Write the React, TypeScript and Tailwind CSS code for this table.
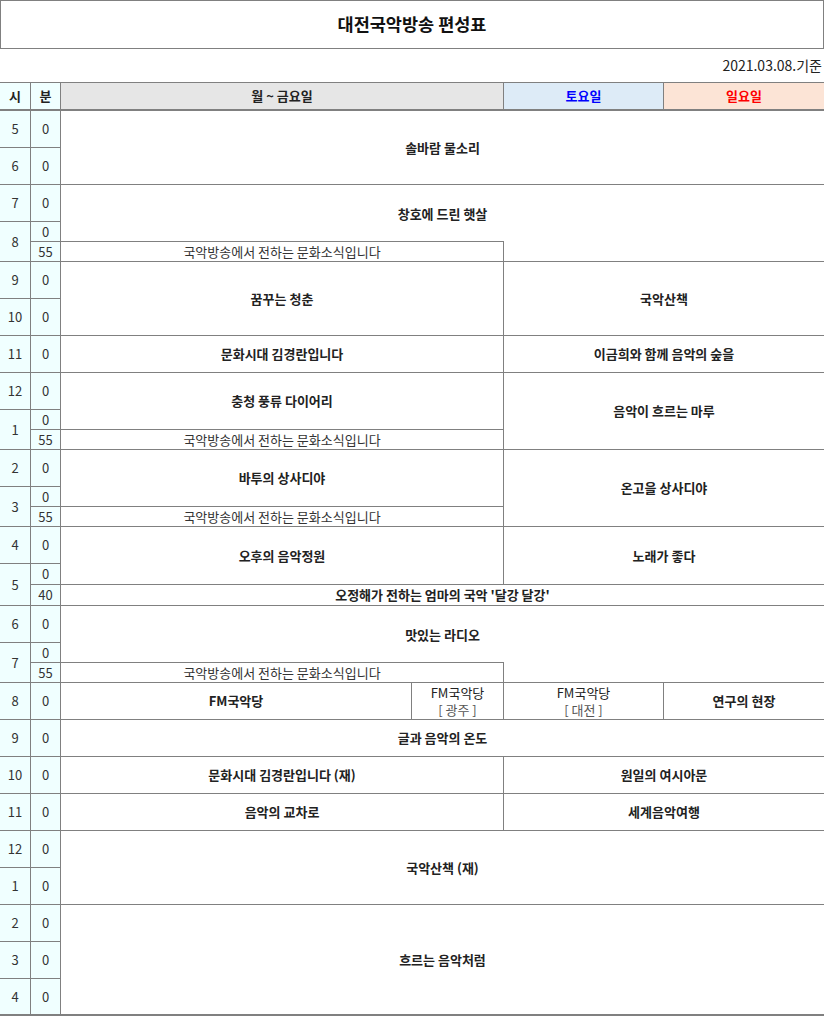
import React from "react";
import { twMerge } from "tailwind-merge";

type P = { className?: string; children?: React.ReactNode };

const Cell = ({ className = "", children }: P) => (
  <div
    className={twMerge(
      "flex items-center justify-center border-b border-r border-[#808080] pb-px text-center leading-[17px]",
      className
    )}
  >
    {children}
  </div>
);

const H = ({ className = "", children }: P) => (
  <Cell className={twMerge("bg-[#f0ffff] text-[#333]", className)}>{children}</Cell>
);

const Prog = ({ className = "", children }: P) => (
  <Cell className={twMerge("font-bold text-[#222]", className)}>{children}</Cell>
);

const News = ({ className = "" }: { className?: string }) => (
  <Cell className={twMerge("col-span-2 text-[#333] shadow-[0_-1px_0_#808080]", className)}>
    국악방송에서 전하는 문화소식입니다
  </Cell>
);

export default function App() {
  return (
    <div className="w-[824px] bg-white font-['Noto_Sans_CJK_KR',sans-serif] text-[13px] text-[#333]">
      <div className="flex h-[49px] items-center justify-center border border-[#808080] pb-px">
        <h1 className="text-[17.5px] font-bold text-[#111]">대전국악방송 편성표</h1>
      </div>
      <div className="flex h-[33px] items-center justify-end pr-[2px] text-[14px] text-[#222]">2021.03.08.기준</div>
      <div className="grid grid-cols-[31px_30px_351px_92px_160px_160px] grid-rows-[29px_37px_37px_37px_20px_20px_37px_37px_37px_37px_20px_20px_37px_20px_20px_37px_21px_21px_37px_20px_20px_37px_37px_37px_37px_37px_37px_37px_37px_37px]">
        {/* header */}
        <H className="border-t border-b-2 font-bold text-[#222]">시</H>
        <H className="border-t border-b-2 font-bold text-[#222]">분</H>
        <Cell className="col-span-2 border-t border-b-2 bg-[#e6e6e6] font-bold text-[#222]">월 ~ 금요일</Cell>
        <Cell className="border-t border-b-2 bg-[#ddebf7] font-bold text-[#0000ff]">토요일</Cell>
        <Cell className="border-t border-b-2 border-r-0 bg-[#fce4d6] font-bold text-[#ff0000]">일요일</Cell>

        {/* 5 */}
        <H>5</H>
        <H>0</H>
        <Prog className="col-span-4 row-span-2 border-r-0">솔바람 물소리</Prog>
        {/* 6 */}
        <H>6</H>
        <H>0</H>
        {/* 7 */}
        <H>7</H>
        <H>0</H>
        <Prog className="col-span-4 row-span-2 border-r-0 border-b-0">창호에 드린 햇살</Prog>
        {/* 8 */}
        <H className="row-span-2">8</H>
        <H>0</H>
        <H>55</H>
        <News />
        <Cell className="col-span-2 border-r-0" />
        {/* 9 */}
        <H>9</H>
        <H>0</H>
        <Prog className="col-span-2 row-span-2">꿈꾸는 청춘</Prog>
        <Prog className="col-span-2 row-span-2 border-r-0">국악산책</Prog>
        {/* 10 */}
        <H>10</H>
        <H>0</H>
        {/* 11 */}
        <H>11</H>
        <H>0</H>
        <Prog className="col-span-2">문화시대 김경란입니다</Prog>
        <Prog className="col-span-2 border-r-0">이금희와 함께 음악의 숲을</Prog>
        {/* 12 */}
        <H>12</H>
        <H>0</H>
        <Prog className="col-span-2 row-span-2">충청 풍류 다이어리</Prog>
        <Prog className="col-span-2 row-span-3 border-r-0">음악이 흐르는 마루</Prog>
        {/* 1 */}
        <H className="row-span-2">1</H>
        <H>0</H>
        <H>55</H>
        <News className="shadow-none" />
        {/* 2 */}
        <H>2</H>
        <H>0</H>
        <Prog className="col-span-2 row-span-2">바투의 상사디야</Prog>
        <Prog className="col-span-2 row-span-3 border-r-0">온고을 상사디야</Prog>
        {/* 3 */}
        <H className="row-span-2">3</H>
        <H>0</H>
        <H>55</H>
        <News className="shadow-none" />
        {/* 4 */}
        <H>4</H>
        <H>0</H>
        <Prog className="col-span-2 row-span-2">오후의 음악정원</Prog>
        <Prog className="col-span-2 row-span-2 border-r-0">노래가 좋다</Prog>
        {/* 5 */}
        <H className="row-span-2">5</H>
        <H>0</H>
        <H>40</H>
        <Prog className="col-span-4 border-r-0">오정해가 전하는 엄마의 국악 &apos;달강 달강&apos;</Prog>
        {/* 6 */}
        <H>6</H>
        <H>0</H>
        <Prog className="col-span-4 row-span-2 border-r-0 border-b-0">맛있는 라디오</Prog>
        {/* 7 */}
        <H className="row-span-2">7</H>
        <H>0</H>
        <H>55</H>
        <News />
        <Cell className="col-span-2 border-r-0" />
        {/* 8 */}
        <H>8</H>
        <H>0</H>
        <Prog>FM국악당</Prog>
        <Cell className="flex-col text-[#222]">
          <span>FM국악당</span>
          <span className="text-[#555]">[ 광주 ]</span>
        </Cell>
        <Cell className="flex-col text-[#222]">
          <span>FM국악당</span>
          <span className="text-[#555]">[ 대전 ]</span>
        </Cell>
        <Prog className="border-r-0">연구의 현장</Prog>
        {/* 9 */}
        <H>9</H>
        <H>0</H>
        <Prog className="col-span-4 border-r-0">글과 음악의 온도</Prog>
        {/* 10 */}
        <H>10</H>
        <H>0</H>
        <Prog className="col-span-2">문화시대 김경란입니다 (재)</Prog>
        <Prog className="col-span-2 border-r-0">원일의 여시아문</Prog>
        {/* 11 */}
        <H>11</H>
        <H>0</H>
        <Prog className="col-span-2">음악의 교차로</Prog>
        <Prog className="col-span-2 border-r-0">세계음악여행</Prog>
        {/* 12 */}
        <H>12</H>
        <H>0</H>
        <Prog className="col-span-4 row-span-2 border-r-0">국악산책 (재)</Prog>
        {/* 1 */}
        <H>1</H>
        <H>0</H>
        {/* 2 */}
        <H>2</H>
        <H>0</H>
        <Prog className="col-span-4 row-span-3 border-r-0 border-b-2">흐르는 음악처럼</Prog>
        {/* 3 */}
        <H>3</H>
        <H>0</H>
        {/* 4 */}
        <H className="border-b-2">4</H>
        <H className="border-b-2">0</H>
      </div>
    </div>
  );
}
